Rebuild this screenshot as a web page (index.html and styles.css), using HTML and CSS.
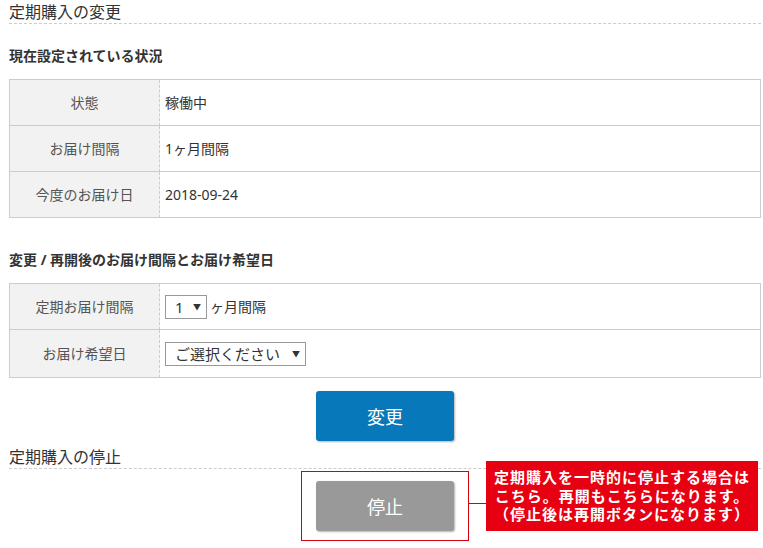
FILE: index.html
```html
<!DOCTYPE html>
<html lang="ja">
<head>
    <meta charset="UTF-8">
    <meta name="viewport" content="width=device-width, initial-scale=1.0">
    <title>定期購入の変更</title>
    <link rel="stylesheet" href="styles.css">
</head>
<body>
    <div class="page">
        <h2 class="section-title">定期購入の変更</h2>

        <h3 class="sub-title">現在設定されている状況</h3>
        <table class="info-table">
            <tr>
                <th>状態</th>
                <td>稼働中</td>
            </tr>
            <tr>
                <th>お届け間隔</th>
                <td>1ヶ月間隔</td>
            </tr>
            <tr>
                <th>今度のお届け日</th>
                <td>2018-09-24</td>
            </tr>
        </table>

        <h3 class="sub-title">変更 / 再開後のお届け間隔とお届け希望日</h3>
        <table class="info-table">
            <tr>
                <th>定期お届け間隔</th>
                <td class="form-cell">
                    <div class="field">
                        <span class="select-wrap">
                            <select class="select select-month">
                                <option>1</option>
                                <option>2</option>
                                <option>3</option>
                            </select>
                        </span>
                        ヶ月間隔
                    </div>
                </td>
            </tr>
            <tr>
                <th>お届け希望日</th>
                <td class="form-cell">
                    <div class="field field-tall">
                        <span class="select-wrap">
                            <select class="select select-date">
                                <option>ご選択ください</option>
                            </select>
                        </span>
                    </div>
                </td>
            </tr>
        </table>

        <div class="button-row">
            <button class="button button-change">変更</button>
        </div>

        <h2 class="section-title section-title-stop">定期購入の停止</h2>
        <div class="stop-area">
            <div class="stop-box">
                <button class="button button-stop">停止</button>
            </div>
            <div class="stop-note">
                定期購入を一時的に停止する場合は<br>
                こちら。再開もこちらになります。<br>
                （停止後は再開ボタンになります）
            </div>
        </div>
    </div>
</body>
</html>
```

FILE: styles.css
```css
body {
    margin: 0;
    font-family: "Noto Sans", "Noto Sans CJK JP", sans-serif;
    color: #333;
    background-color: white;
}
.page {
    margin: 0 2px 0 9px;
    padding-top: 1px;
}
.section-title {
    margin: 0;
    font-size: 16px;
    font-weight: normal;
    line-height: 22px;
    border-bottom: 1px dashed #ccc;
}
.section-title-stop {
    margin-top: 5px;
}
.sub-title {
    margin: 22px 0 13px;
    font-size: 14px;
    font-weight: bold;
    line-height: 20px;
}
.info-table + .sub-title {
    margin-top: 32px;
}
.info-table {
    width: 100%;
    border-collapse: separate;
    border-spacing: 0;
    border: 1px solid #ccc;
    border-bottom: none;
    font-size: 14px;
}
.info-table th {
    box-sizing: border-box;
    width: 150px;
    padding: 12px 0;
    line-height: 21px;
    font-weight: normal;
    color: #555;
    background-color: #f2f2f2;
    text-align: center;
    border-right: 1px dashed #ccc;
    border-bottom: 1px solid #ccc;
}
.info-table td {
    padding: 12px 5px;
    line-height: 21px;
    border-bottom: 1px solid #ccc;
}
.info-table .form-cell {
    padding: 0 5px;
}
.field {
    display: flex;
    align-items: center;
    gap: 3px;
    height: 45px;
}
.field-tall {
    height: 47px;
}
.select-wrap {
    position: relative;
    display: inline-block;
}
.select-wrap::after {
    content: "▼";
    position: absolute;
    right: 6px;
    top: 50%;
    transform: translateY(-50%);
    font-size: 8px;
    line-height: 8px;
    color: #333;
    pointer-events: none;
}
.select {
    display: block;
    appearance: none;
    -webkit-appearance: none;
    box-sizing: border-box;
    height: 24px;
    padding: 0 0 0 9px;
    border: 1px solid #999;
    border-radius: 0;
    background-color: white;
    font-family: inherit;
    font-size: 15px;
    color: #333;
}
.select-month {
    width: 42px;
}
.select-date {
    width: 141px;
}
.button-row {
    display: flex;
    justify-content: center;
    margin-top: 13px;
}
.button {
    width: 138px;
    height: 50px;
    border: none;
    border-radius: 3px;
    font-family: inherit;
    font-size: 18px;
    color: white;
    box-shadow: 1px 1px 2px rgba(0, 0, 0, 0.3);
    cursor: pointer;
}
.button-change {
    background-color: #0779bb;
}
.button-stop {
    background-color: #999;
}
.stop-area {
    position: relative;
    display: flex;
    justify-content: center;
    padding-top: 2px;
    padding-bottom: 7px;
}
.stop-box {
    padding: 9px 14px;
    border: 1px solid #d7000f;
}
.stop-note {
    position: absolute;
    top: -8px;
    left: 477px;
    box-sizing: border-box;
    width: 272px;
    height: 70px;
    padding-top: 7px;
    background-color: #e60012;
    color: white;
    font-size: 15px;
    font-weight: bold;
    line-height: 18.5px;
    letter-spacing: 1px;
    text-align: center;
}
.stop-note::before {
    content: "";
    position: absolute;
    left: -18px;
    top: 42px;
    width: 18px;
    height: 1px;
    background-color: #d7000f;
}
```
